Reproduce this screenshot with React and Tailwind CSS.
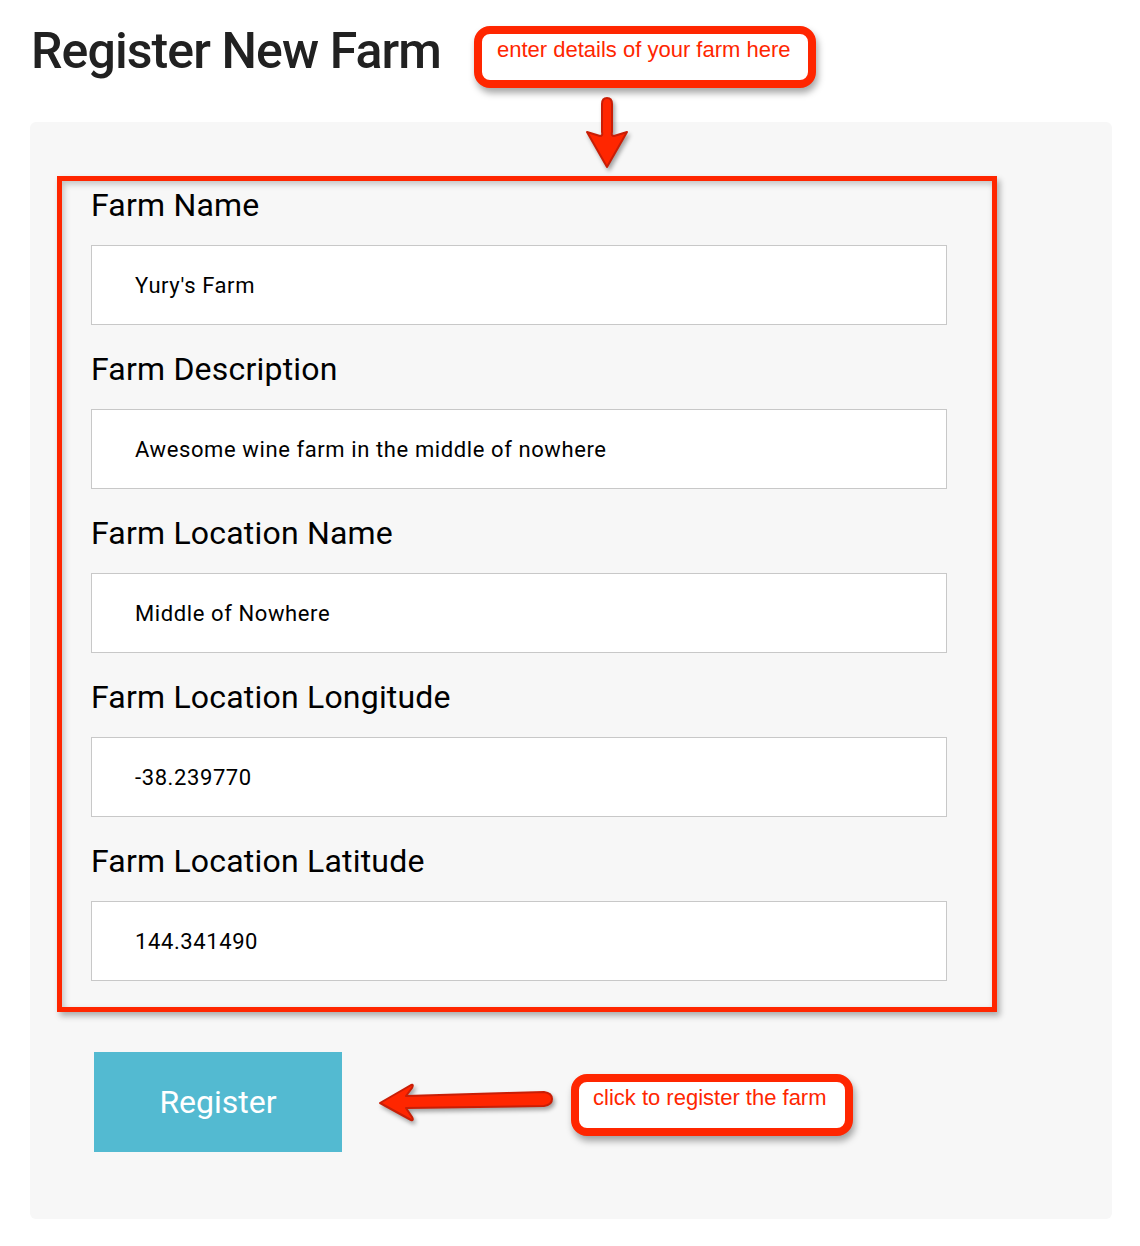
import React from "react";

const fields = [
  { label: "Farm Name", value: "Yury's Farm" },
  { label: "Farm Description", value: "Awesome wine farm in the middle of nowhere" },
  { label: "Farm Location Name", value: "Middle of Nowhere" },
  { label: "Farm Location Longitude", value: "-38.239770" },
  { label: "Farm Location Latitude", value: "144.341490" },
];

function Callout({ text, className }) {
  return (
    <div
      className={`absolute border-[8px] border-[#ff2600] bg-white rounded-[16px] shadow-[2px_5px_7px_rgba(0,0,0,0.35)] ${className}`}
      style={{ fontFamily: '"Liberation Sans", Arial, sans-serif' }}
    >
      <span className="block text-[22px] leading-[24px] text-[#ff2600] whitespace-nowrap">{text}</span>
    </div>
  );
}

export default function App() {
  return (
    <div
      className="relative w-[1140px] h-[1246px] bg-white"
      style={{ fontFamily: "Roboto, sans-serif" }}
    >
      {/* Page title */}
      <h1 className="pl-[31px] pt-[26px] text-[50px] leading-[50px] font-medium text-[#212121] tracking-[-0.9px]">
        Register New Farm
      </h1>

      {/* Form panel */}
      <div className="mt-[46px] ml-[30px] w-[1082px] h-[1097px] bg-[#f7f7f7] rounded-[6px] pt-[54px] pl-[27px]">
        <div className="w-[940px] border-[5px] border-[#ff2600] pt-[4px] pb-[26px] pl-[29px] pr-[45px] shadow-[3px_4px_6px_rgba(0,0,0,0.3),inset_2px_3px_6px_rgba(0,0,0,0.22)]">
          <div className="flex flex-col gap-[24px]">
            {fields.map((f) => (
              <div key={f.label} className="flex flex-col gap-[20px]">
                <label className="text-[32px] leading-[40px] text-black tracking-[0.2px]">{f.label}</label>
                <div className="h-[80px] bg-white border border-[#c8c8c8] flex items-center pl-[43px] text-[22px] tracking-[0.6px] text-black">
                  {f.value}
                </div>
              </div>
            ))}
          </div>
        </div>

        <button className="mt-[40px] ml-[37px] w-[248px] h-[100px] bg-[#53bad1] text-white text-[32px] flex items-center justify-center">
          Register
        </button>
      </div>

      {/* Annotations */}
      <Callout
        text="enter details of your farm here"
        className="left-[474px] top-[26px] w-[342px] h-[62px] pl-[15px] pt-[4px]"
      />
      <Callout
        text="click to register the farm"
        className="left-[571px] top-[1074px] w-[282px] h-[62px] pl-[14px] pt-[4px]"
      />

      {/* Down arrow */}
      <svg
        className="absolute left-[580px] top-[94px] drop-shadow-[2px_3px_2px_rgba(0,0,0,0.35)]"
        width="56"
        height="80"
        viewBox="0 0 56 80"
      >
        <path
          d="M22 10 Q22 4 27 4 Q32 4 32 10 L32 38 Q31 42 34 42 L47 38 L27 73 L7 38 L20 42 Q23 42 22 38 Z"
          fill="#ff2600"
          stroke="#c91e06"
          strokeWidth="2"
          strokeLinejoin="round"
        />
      </svg>

      {/* Left arrow */}
      <svg
        className="absolute left-[374px] top-[1078px] drop-shadow-[2px_3px_2px_rgba(0,0,0,0.35)]"
        width="186"
        height="50"
        viewBox="0 0 186 50"
      >
        <path
          d="M6 25 L37 7 Q40 6 38 10 L32 18 L170 14 Q178 15 178 21 Q178 27 170 28 L32 30 L38 39 Q40 43 37 42 Z"
          fill="#ff2600"
          stroke="#c91e06"
          strokeWidth="2"
          strokeLinejoin="round"
        />
      </svg>
    </div>
  );
}
